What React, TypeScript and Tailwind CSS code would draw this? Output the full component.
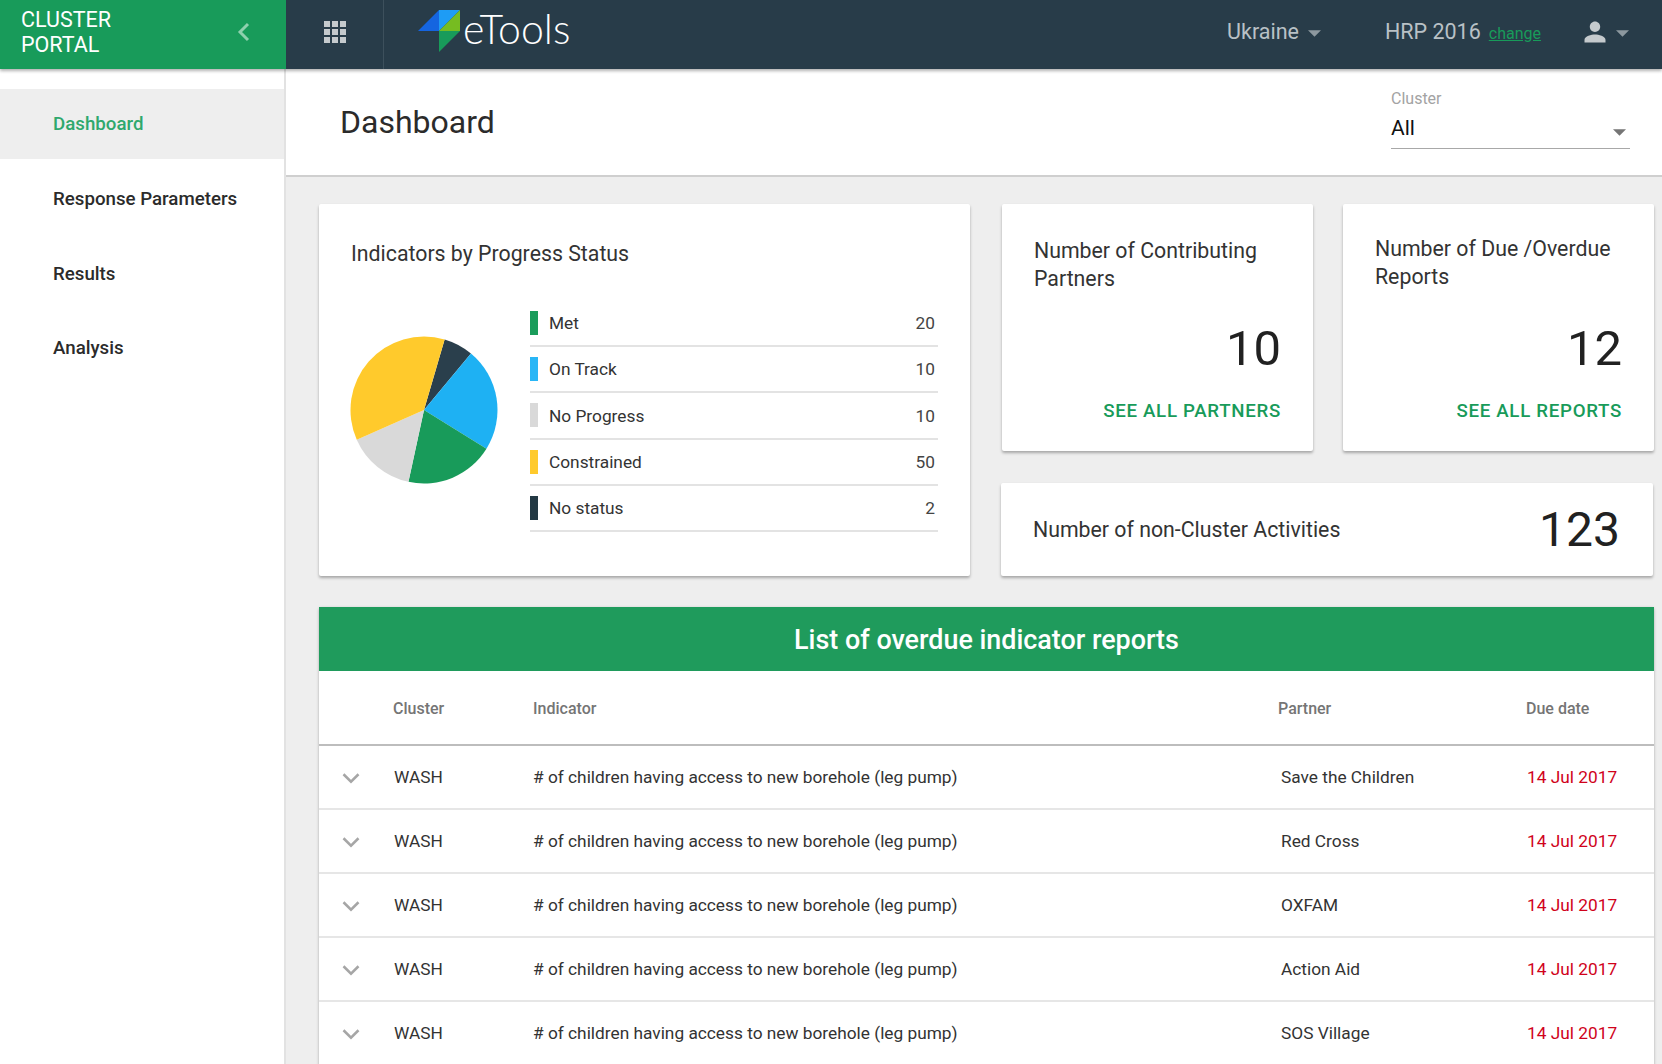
import { ChevronDown, ChevronLeft } from 'lucide-react';

const navItems = ['Dashboard', 'Response Parameters', 'Results', 'Analysis'];

const legend = [
  { label: 'Met', value: 20, color: 'bg-[#1a9c5b]' },
  { label: 'On Track', value: 10, color: 'bg-[#29b6f6]' },
  { label: 'No Progress', value: 10, color: 'bg-[#d9d9d9]' },
  { label: 'Constrained', value: 50, color: 'bg-[#ffca2c]' },
  { label: 'No status', value: 2, color: 'bg-[#233944]' },
];

const partners = ['Save the Children', 'Red Cross', 'OXFAM', 'Action Aid', 'SOS Village'];

// angles measured clockwise from 12 o'clock
const slices = [
  { from: 16.3, to: 39.7, fill: '#2a3f4c' },
  { from: 39.7, to: 121.8, fill: '#1eb1f3' },
  { from: 121.8, to: 192.2, fill: '#189b5a' },
  { from: 192.2, to: 246.2, fill: '#d9d9d9' },
  { from: 246.2, to: 376.3, fill: '#ffca2c' },
];

function slicePath(from: number, to: number) {
  const r = 73.5;
  const pt = (a: number) => {
    const rad = (a * Math.PI) / 180;
    return `${(75 + r * Math.sin(rad)).toFixed(2)} ${(75 - r * Math.cos(rad)).toFixed(2)}`;
  };
  return `M75 75L${pt(from)}A${r} ${r} 0 ${to - from > 180 ? 1 : 0} 1 ${pt(to)}Z`;
}

function Caret({ className }: { className: string }) {
  return (
    <svg width="13" height="7" viewBox="0 0 14 7" className={className}>
      <path d="M0 0h14L7 7z" fill="currentColor" />
    </svg>
  );
}

function Logo() {
  return (
    <svg width="44" height="42" viewBox="0 0 44 42" className="shrink-0">
      <path d="M0 21L21 0v21z" fill="#1565e0" />
      <path d="M21 0h21L21 21z" fill="#1e9cf5" />
      <path d="M42 0v21H21z" fill="#76bc21" />
      <path d="M21 21h21L21 42z" fill="#189b5a" />
    </svg>
  );
}

function StatCard({ title, value, link, titleClass }: { title: string; value: number; link: string; titleClass: string }) {
  return (
    <div className="flex-1 h-[247px] bg-white rounded-[2px] shadow-[0_2px_3px_rgba(0,0,0,0.3)] pl-[32px] pr-[32px] flex flex-col">
      <div className={`text-[21.3px] leading-[28px] text-[#333] ${titleClass}`}>{title}</div>
      <div className="mt-auto text-right text-[49px] leading-[60px] text-[#212121]">{value}</div>
      <a className="mt-[20px] mb-[28px] text-right text-[18.7px] leading-[24px] font-medium tracking-[0.7px] text-[#189b5a]">{link}</a>
    </div>
  );
}

export default function App() {
  return (
    <div className="h-[1064px] overflow-hidden flex flex-col bg-[#eeeeee] font-['Roboto',sans-serif]">
      <header className="relative z-20 h-[69px] shrink-0 flex bg-[#283c49] shadow-[0_2px_3px_rgba(0,0,0,0.3)]">
        <div className="w-[286px] shrink-0 bg-[#189b5a] flex items-center justify-between pl-[21px] pr-[26px] pb-[6px]">
          <div className="text-[21.5px] leading-[25px] text-white">
            CLUSTER
            <br />
            PORTAL
          </div>
          <ChevronLeft size={32} strokeWidth={2.2} strokeLinecap="butt" strokeLinejoin="miter" className="text-[#8fd0ae]" />
        </div>
        <div className="w-[98px] shrink-0 flex items-center justify-center border-r border-[#3d505c] pb-[6px]">
          <div className="grid grid-cols-3 gap-[2px]">
            {Array.from({ length: 9 }).map((_, i) => (
              <div key={i} className="w-[6px] h-[6px] bg-[#c5cacd]" />
            ))}
          </div>
        </div>
        <div className="flex items-center pl-[34px] pb-[7px]">
          <Logo />
          <span className="ml-[1px] text-[41px] font-light text-white font-['Lato',sans-serif] -mt-[5px]">eTools</span>
        </div>
        <div className="ml-auto flex items-center text-[#b9c1c6] pr-[33px] pb-[5px]">
          <span className="text-[21.5px]">Ukraine</span>
          <Caret className="ml-[9px] mt-[2px] text-[#8d989f]" />
          <span className="ml-[64px] text-[21.5px]">HRP 2016</span>
          <a className="ml-[8px] mt-[3px] text-[16px] underline text-[#189b5a]">change</a>
          <svg width="24" height="24" viewBox="0 0 24 24" className="ml-[42px] -mt-[1px] text-[#c5cacd]">
            <path fill="currentColor" d="M12 12c2.9 0 5.2-2.3 5.2-5.2S14.9 1.500 12 1.500 6.800 3.900 6.800 6.800 9.100 12 12 12zm0 2.500c-3.500 0-10.500 1.800-10.500 5.300v2.700h21v-2.700c0-3.500-7-5.300-10.500-5.300z" />
          </svg>
          <Caret className="ml-[9px] mt-[2px] text-[#8d989f]" />
        </div>
      </header>

      <div className="flex-1 flex min-h-0">
        <aside className="w-[286px] shrink-0 bg-white border-r-2 border-[#e2e2e2] pt-[20px]">
          {navItems.map((item, i) => (
            <div
              key={item}
              className={`h-[70px] mb-[4.600px] pl-[53px] pt-[1px] flex items-center text-[18.7px] font-medium ${i === 0 ? 'bg-[#eeeeee] text-[#2fa86d]' : 'text-[#2b2b2b]'}`}
            >
              {item}
            </div>
          ))}
        </aside>

        <main className="flex-1 min-w-0 overflow-hidden">
          <div className="h-[108px] bg-white border-b-2 border-[#cfcfcf] flex items-center justify-between pl-[54px] pr-[32px]">
            <h1 className="text-[32px] font-normal text-[#2b2b2b]">Dashboard</h1>
            <div className="w-[239px] -mt-[6px]">
              <div className="text-[16px] leading-[18px] text-[#a3a3a3]">Cluster</div>
              <div className="mt-[8px] h-[33px] flex items-center justify-between border-b border-[#a8a8a8] pr-[4px] text-[21px] text-[#111]">
                <span className="-mt-[5px]">All</span>
                <Caret className="mt-[2px] text-[#757575]" />
              </div>
            </div>
          </div>

          <div className="pt-[27px] pl-[33px] pr-[8px]">
            <div className="flex gap-[32px]">
              <div className="w-[651px] shrink-0 h-[372px] bg-white rounded-[2px] shadow-[0_2px_3px_rgba(0,0,0,0.3)] px-[32px]">
                <div className="pt-[36px] text-[21.3px] leading-[28px] text-[#333]">Indicators by Progress Status</div>
                <div className="flex mt-[33px]">
                  <svg width="150" height="150" viewBox="0 0 150 150" className="shrink-0 mt-[34px] -ml-[2px]">
                    {slices.map(s => (
                      <path key={s.fill} d={slicePath(s.from, s.to)} fill={s.fill} />
                    ))}
                  </svg>
                  <div className="ml-[31px] flex-1">
                    {legend.map(row => (
                      <div key={row.label} className="h-[46.200px] flex items-center border-b-2 border-[#e3e3e3] text-[17.3px] text-[#333]">
                        <div className={`w-[8px] h-[24px] mr-[11px] ${row.color}`} />
                        <span className="mt-[2px]">{row.label}</span>
                        <span className="ml-auto pr-[3px] mt-[2px] text-[#444]">{row.value}</span>
                      </div>
                    ))}
                  </div>
                </div>
              </div>

              <div className="flex-1 flex flex-col gap-[32px]">
                <div className="flex gap-[30px]">
                  <StatCard title="Number of Contributing Partners" value={10} link="SEE ALL PARTNERS" titleClass="pt-[33px]" />
                  <StatCard title="Number of Due /Overdue Reports" value={12} link="SEE ALL REPORTS" titleClass="pt-[31px]" />
                </div>
                <div className="h-[93px] -ml-[1px] mr-[1px] bg-white rounded-[2px] shadow-[0_2px_3px_rgba(0,0,0,0.3)] pl-[32px] pr-[33px] flex items-center justify-between">
                  <span className="text-[21.3px] text-[#333]">Number of non-Cluster Activities</span>
                  <span className="text-[48px] text-[#212121]">123</span>
                </div>
              </div>
            </div>

            <div className="mt-[31px] bg-white rounded-[2px] shadow-[0_1px_3px_rgba(0,0,0,0.3)]">
              <div className="h-[64px] pt-[2px] bg-[#1f9b5c] flex items-center justify-center text-[26.9px] font-medium text-white">
                List of overdue indicator reports
              </div>
              <div className="h-[75px] pt-[2px] grid grid-cols-[74px_140px_745px_248px_1fr] items-center border-b-2 border-[#bdbdbd] text-[16px] font-medium text-[#757575]">
                <span />
                <span>Cluster</span>
                <span>Indicator</span>
                <span>Partner</span>
                <span>Due date</span>
              </div>
              {partners.map(partner => (
                <div key={partner} className="h-[64px] pt-[1px] grid grid-cols-[75px_139px_748px_246px_1fr] items-center border-b-2 border-[#e6e6e6] text-[17.3px] text-[#333]">
                  <ChevronDown size={30} strokeWidth={2} strokeLinecap="butt" strokeLinejoin="miter" className="ml-[17px] mt-[1px] text-[#a6a6a6]" />
                  <span>WASH</span>
                  <span># of children having access to new borehole (leg pump)</span>
                  <span>{partner}</span>
                  <span className="text-[#d0021b]">14 Jul 2017</span>
                </div>
              ))}
            </div>
          </div>
        </main>
      </div>
    </div>
  );
}
